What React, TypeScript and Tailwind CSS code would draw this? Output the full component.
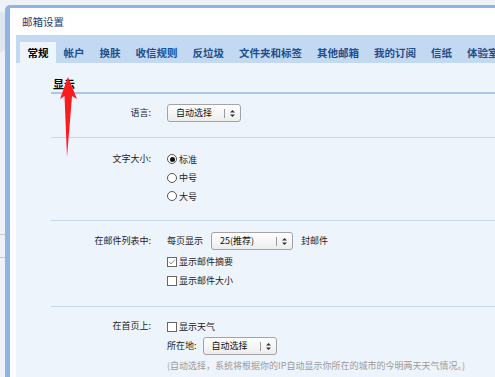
import React from "react";

const tabs = ["常规", "帐户", "换肤", "收信规则", "反垃圾", "文件夹和标签", "其他邮箱", "我的订阅", "信纸", "体验室"];

function Select({ label, w }: { label: string; w: string }) {
  return (
    <div
      className={`${w} h-[18px] flex items-center border border-[#a3a3a3] rounded-[3px] bg-gradient-to-b from-white to-[#ededed] text-[9px] text-[#111]`}
    >
      <span className="pl-[8px] flex-1">{label}</span>
      <span className="w-px h-[9px] bg-[#9a9a9a]" />
      <svg width="5" height="7" viewBox="0 0 5 7" className="mx-[5px]">
        <path d="M2.5 0 L5 2.6 H0 Z M2.5 7 L5 4.4 H0 Z" fill="#333" />
      </svg>
    </div>
  );
}

function Radio({ checked, label }: { checked?: boolean; label: string }) {
  return (
    <div className="h-[18.5px] flex items-center gap-[2px]">
      <span className="w-[10px] h-[10px] rounded-full border border-[#555] bg-white flex items-center justify-center">
        {checked && <span className="w-[5px] h-[5px] rounded-full bg-[#111]" />}
      </span>
      <span>{label}</span>
    </div>
  );
}

function Check({ checked, label }: { checked?: boolean; label: string }) {
  return (
    <div className="h-[19px] flex items-center gap-[2px]">
      <span className="w-[10px] h-[10px] border border-[#666] bg-white flex items-center justify-center">
        {checked && (
          <svg width="8" height="8" viewBox="0 0 8 8">
            <path d="M1 4 L3 6 L7 1.5" stroke="#888" strokeWidth="0.9" fill="none" />
          </svg>
        )}
      </span>
      <span>{label}</span>
    </div>
  );
}

function Section({ label, children, className }: { label: string; children: React.ReactNode; className: string }) {
  return (
    <div className={`flex border-b border-[#c8d8ec] ${className}`}>
      <div className="w-[101px] pr-[1px] text-right h-[18px] leading-[18px] shrink-0">{label}</div>
      <div className="pl-[15px] flex flex-col">{children}</div>
    </div>
  );
}

export default function App() {
  return (
    <div
      className="w-[495px] h-[377px] overflow-hidden bg-[#eef1f5] relative flex text-[9px] text-[#222]"
      style={{ fontFamily: '"Microsoft YaHei", "Noto Sans CJK SC", "Liberation Sans", sans-serif' }}
    >
      {/* left strip behind dialog */}
      <div className="w-[5px] shrink-0 flex flex-col pt-[12px]">
        <div className="h-[40px] rounded-r-[4px] bg-[#dfe6ef]" />
        <div className="h-px bg-[#c9c9c9] mt-[182px]" />
        <div className="h-px bg-[#c9c9c9] mt-[22px]" />
      </div>
      <div className="flex-1 mt-[5px] border-l-[5px] border-t-[3px] border-[#8fb3e3] rounded-tl-[5px] bg-white flex flex-col">
        <div className="h-[27px] pl-[12px] flex items-center text-[10.5px] text-[#1d3c70]">邮箱设置</div>
        <div className="flex-1 ml-[6px] bg-[#eef4fc] flex flex-col">
          <div className="h-[28px] bg-[#c3d9f2] flex items-end pl-[4px] text-[10.5px] font-bold text-[#1f4f8c] whitespace-nowrap">
            {tabs.map((t, i) => (
              <div
                key={t}
                className={`h-[21px] px-[7.5px] flex items-center shrink-0 ${i === 0 ? "bg-[#eef4fc] text-black" : ""}`}
              >
                {t}
              </div>
            ))}
          </div>
          <div className="pl-[35px] pt-[14px] flex flex-col">
            <div className="text-[11px] text-black font-bold leading-[14px] pl-[2px] pb-[1px] border-b-2 border-[#a7c6ea]">显示</div>
            <Section label="语言:" className="h-[44px] pt-[10px]">
              <Select label="自动选择" w="w-[74px]" />
            </Section>
            <Section label="文字大小:" className="h-[83px] pt-[12px]">
              <Radio checked label="标准" />
              <Radio label="中号" />
              <Radio label="大号" />
            </Section>
            <Section label="在邮件列表中:" className="h-[86px] pt-[11px]">
              <div className="h-[18px] flex items-center">
                <span>每页显示</span>
                <span className="ml-[8px]">
                  <Select label="25(推荐)" w="w-[82px]" />
                </span>
                <span className="ml-[8px]">封邮件</span>
              </div>
              <div className="mt-[2px]">
                <Check checked label="显示邮件摘要" />
                <Check label="显示邮件大小" />
              </div>
            </Section>
            <div className="flex pt-[10px]">
              <div className="w-[101px] pr-[1px] text-right h-[18px] leading-[18px] shrink-0">在首页上:</div>
              <div className="pl-[15px] flex flex-col">
                <Check label="显示天气" />
                <div className="h-[20px] flex items-center">
                  <span>所在地:</span>
                  <span className="ml-[6px]">
                    <Select label="自动选择" w="w-[74px]" />
                  </span>
                </div>
                <div className="mt-[3px] text-[#9a9a9a] whitespace-nowrap">
                  (自动选择，系统将根据你的IP自动显示你所在的城市的今明两天天气情况。)
                </div>
              </div>
            </div>
          </div>
        </div>
      </div>
      {/* red annotation arrow */}
      <svg className="absolute left-0 top-0" width="495" height="377" viewBox="0 0 495 377">
        <polygon points="68,77 60,99 64.5,96 67,157 72,96 77,99" fill="#fe1b1b" />
      </svg>
    </div>
  );
}
